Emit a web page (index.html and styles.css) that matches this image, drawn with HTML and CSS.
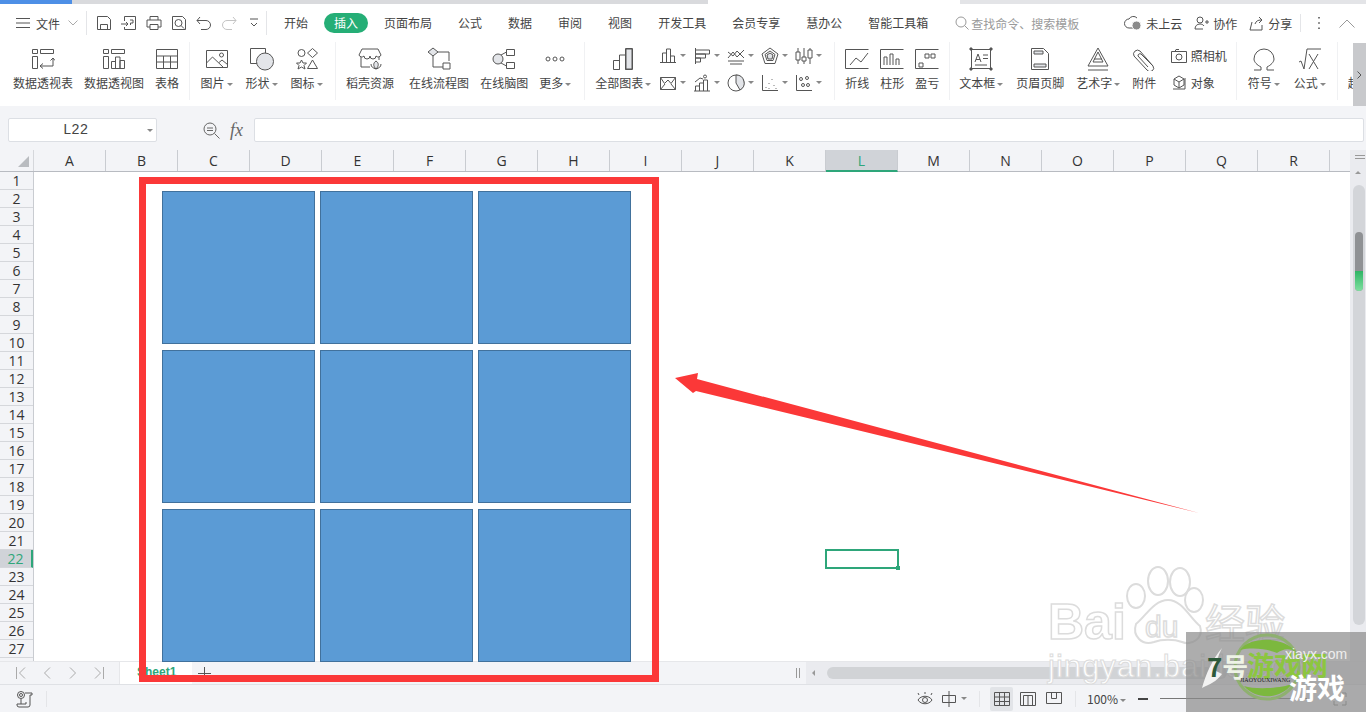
FILE: index.html
```html
<!DOCTYPE html>
<html lang="zh">
<head>
<meta charset="utf-8">
<title>WPS 表格</title>
<link rel="stylesheet" href="styles.css">
</head>
<body>
<div class="app">

  <div class="title-strip">
    <div class="strip-blue"></div><div class="strip-grey"></div><div class="strip-white"></div><div class="strip-rest"></div>
  </div>

  <div class="topbar">
    <svg class="menu-ic" viewBox="0 0 14 12"><path d="M0 1.5h14M0 6h14M0 10.5h14"/></svg>
    <span class="file-label">文件</span>
    <svg class="chev-ic" viewBox="0 0 10 6"><path d="M.5.5 5 5 9.5.5"/></svg>
    <i class="vsep first"></i>
    <div class="quick">
      <svg viewBox="0 0 16 16"><path d="M1.5 1.5h10l3 3v10h-13zM4.5 14.5v-5h7v5"/></svg>
      <svg viewBox="0 0 16 16"><path d="M3.5 6V1.5h11v13h-11V12M0 9h7M5 7l2 2-2 2M9 5h3v3H9.500v2"/></svg>
      <svg viewBox="0 0 16 16"><path d="M4 5V1.500h8V5M1 12V5h14v7h-3M4 9.500h8v5H4zM4 12H1"/></svg>
      <svg viewBox="0 0 16 16"><path d="M1.500 1.500h10l3 3v10h-13z"/><circle cx="7.500" cy="8" r="3.500"/><path d="m10 10.500 3 3"/></svg>
      <svg viewBox="0 0 16 16"><path d="M1 5.500h9a4.500 4.500 0 0 1 0 9H5M4 2 1 5.500 4 9"/></svg>
      <svg class="faded" viewBox="0 0 16 16"><path d="M15 5.500H6a4.500 4.500 0 0 0 0 9h5M12 2l3 3.500L12 9"/></svg>
      <svg viewBox="0 0 16 16"><path d="M4 4h8M5 8l3 3 3-3"/></svg>
    </div>
    <i class="vsep second"></i>
    <nav class="tabs">
      <span class="tab">开始</span>
      <span class="tab active">插入</span>
      <span class="tab">页面布局</span>
      <span class="tab">公式</span>
      <span class="tab">数据</span>
      <span class="tab">审阅</span>
      <span class="tab">视图</span>
      <span class="tab">开发工具</span>
      <span class="tab">会员专享</span>
      <span class="tab">慧办公</span>
      <span class="tab">智能工具箱</span>
    </nav>
    <div class="search">
      <svg viewBox="0 0 14 14"><circle cx="6" cy="6" r="5"/><path d="m9.500 9.500 4 4"/></svg>
      <span>查找命令、搜索模板</span>
    </div>
    <div class="top-actions">
      <span class="action"><svg class="cloud" viewBox="0 0 18 16"><path d="M9 13H5A4.500 4.500 0 0 1 5 4a5 5 0 0 1 8-1"/><circle class="solid" cx="12.500" cy="10.500" r="4.500"/></svg>未上云</span>
      <span class="action"><svg viewBox="0 0 15 15"><circle cx="6" cy="4" r="3"/><path d="M1 13c0-3 2-5 5-5 1.500 0 3 .5 4 2M1 13h8M11 6h4M13 4v4"/></svg>协作</span>
      <span class="action"><svg viewBox="0 0 15 15"><path d="M3 6 1 14h12V9M6 8c1-3 3-4 6-4M10 1l3 3-3 3"/></svg>分享</span>
      <i class="vsep third"></i>
      <svg class="dots" viewBox="0 0 4 14"><path d="M2 1v1.500M2 6.200v1.500M2 11.500V13"/></svg>
      <svg class="up-ic" viewBox="0 0 16 9"><path d="M.5 8.500 8 1l7.500 7.500"/></svg>
    </div>
  </div>

  <div class="ribbon">
    <div class="group g1">
      <div class="tool"><svg viewBox="0 0 24 24"><path d="M1.500 2.500h5v4h-5zM9.500 2.500h13v4h-13zM1.500 9.500h5v12h-5zM9 19h13v-8M9 19l3-2.500M9 19l3 2.500M22 11l-2.500 2.500M22 11l2 2.500"/></svg><span>数据透视表</span></div>
      <div class="tool"><svg viewBox="0 0 24 24"><path d="M1.500 2.500h5v4h-5zM9.500 2.500h13v4h-13zM1.500 9.500h5v12h-5zM9.500 21.500v-7h4v7M13.500 21.500V10h4.500v11.500M18 21.500v-8h4.500v8zM9.500 21.500h9"/></svg><span>数据透视图</span></div>
      <div class="tool"><svg viewBox="0 0 24 24"><path d="M1.500 2.500h21v19h-21zM1.500 9h21M1.500 15h21M8.500 9v12.500M15.500 9v12.500"/></svg><span>表格</span></div>
    </div>
    <i class="rsep"></i>
    <div class="group g2">
      <div class="tool"><svg viewBox="0 0 24 24"><path d="M1.500 3.500h21v17h-21zM1.500 16l6-6 11 10.500M14 15.500l3-2.500 5.500 4.500"/><circle cx="16.500" cy="8" r="2"/></svg><span class="caret">图片</span></div>
      <div class="tool"><svg class="wide" viewBox="0 0 26 24"><path d="M1.500 1.500h15v15h-15z"/><circle class="gray" cx="16" cy="14.500" r="8.500"/></svg><span class="caret">形状</span></div>
      <div class="tool"><svg viewBox="0 0 24 24"><circle cx="6.500" cy="6" r="3.500"/><path d="m17.500 1.500 5 4.500-5 4.500-5-4.500zM6.500 13l1.500 3h3.500l-2.500 2.500 1 3.500-3.500-2-3.500 2 1-3.500L1.500 16H5zM17.500 13l5 8.500h-10z"/></svg><span class="caret">图标</span></div>
    </div>
    <i class="rsep"></i>
    <div class="group g3">
      <div class="tool"><svg viewBox="0 0 24 24"><path d="M4 2h16l3 6a3 3 0 0 1-5 1 3 3 0 0 1-6 0 3 3 0 0 1-6 0 3 3 0 0 1-5-1zM3 10v10h9M21 10v3"/><path class="gray" d="M18 14c3 2 3 5 0 8-3-3-3-6 0-8z"/><path d="M13 17c0 3 2 4 5 5M23 17c0 3-2 4-5 5"/></svg><span>稻壳资源</span></div>
      <div class="tool"><svg viewBox="0 0 24 24"><path class="gray" d="M6 1l5 4-5 4-5-4z"/><path d="M11 5h11v9M6 9v11h10M16 16h7v6h-7z" /></svg><span>在线流程图</span></div>
      <div class="tool"><svg viewBox="0 0 24 24"><circle class="gray" cx="6" cy="12" r="5"/><path d="M14.500 2.500h8v6h-8zM14.500 15.500h8v6h-8zM9 8l5.500-3M9 16l5.500 3"/></svg><span>在线脑图</span></div>
      <div class="tool"><svg viewBox="0 0 24 24"><circle cx="5" cy="12" r="2"/><circle cx="12" cy="12" r="2"/><circle cx="19" cy="12" r="2"/></svg><span class="caret">更多</span></div>
    </div>
    <i class="rsep"></i>
    <div class="group g4">
      <div class="tool"><svg viewBox="0 0 24 24"><path d="M2.500 22.500v-9h6v9zM8.500 22.500V8h6v14.500M14.500 22.500V1.500h7v21z"/><path class="gray" d="M15 2h6v20h-6z"/></svg><span class="caret">全部图表</span></div>
      <div class="chart-grid">
        <span class="mini caret"><svg viewBox="0 0 18 18"><path d="M3.500 15V6h4v9M7.500 15V2h4v13M11.500 15V9h4v6M1 15.500h16"/></svg></span>
        <span class="mini caret"><svg viewBox="0 0 18 18"><path d="M2.500 1v16M2.500 3h14v4h-14M2.500 7h10v4h-10M2.500 11h5v4h-5"/></svg></span>
        <span class="mini caret"><svg viewBox="0 0 18 18"><path d="M1 11l5-6 4 5 7-7M1 5l5 4 4-5 7 7M1 14h16M3 17h12"/></svg></span>
        <span class="mini caret"><svg viewBox="0 0 18 18"><path d="m9 1 8 6-3 9.500H4L1 7zM9 4l5 3.500-2 6H6l-2-6z"/><path class="gray" d="m9 6 3 2-1 4H7L6 8z"/></svg></span>
        <span class="mini caret"><svg viewBox="0 0 18 18"><path d="M3 1v4M3 13v4M1 5h4v8H1zM9 1v9M9 14v3M7 10h4v4H7zM15 1v2M15 11v6M13 3h4v8h-4z"/></svg></span>
        <span class="mini caret"><svg viewBox="0 0 18 18"><path d="M1.500 3.500h15v12h-15zM1.500 3.500l4 6 3.500-3.500 3 3.500 4.500-6M1.500 15.500 6 10M16.500 15.500 12 10"/></svg></span>
        <span class="mini caret"><svg viewBox="0 0 18 18"><path d="M1 17h16M2.500 17v-5h4v5M6.500 17V9h4v8M10.500 17V6h4v11M2 8l5-4 3 1"/><circle cx="12" cy="2.500" r="1.500"/></svg></span>
        <span class="mini caret"><svg viewBox="0 0 18 18"><circle cx="9" cy="9" r="8"/><path class="gray" d="M9 1a8 8 0 0 1 4 15L9 9z"/></svg></span>
        <span class="mini caret"><svg viewBox="0 0 18 18"><path d="M1.500 1v15.500H17"/><path class="dotted" d="M5 13v.5M8 9v.500M11 5v.500M8 14v.500M13 11v.500M15 14v.500"/></svg></span>
        <span class="mini caret"><svg viewBox="0 0 18 18"><path d="M1.500 1v15.500H17"/><circle cx="6" cy="5" r="1.500"/><circle cx="12" cy="4" r="1.500"/><circle cx="8" cy="11" r="1.500"/><circle cx="13" cy="11" r="1.500"/></svg></span>
      </div>
    </div>
    <i class="rsep"></i>
    <div class="group g5">
      <div class="tool spark"><svg viewBox="0 0 24 24"><path d="M.5 2.500h23M.5 21.500h23M.5 2.500v19M5 18l6-7 5 4 7-9"/></svg><span>折线</span></div>
      <div class="tool spark"><svg viewBox="0 0 24 24"><path d="M.5 2.500h23M.5 21.500h23M.5 2.500v19M4 18v-8h3v8M10 18V7h3v11M16 18v-6h3v6"/></svg><span>柱形</span></div>
      <div class="tool spark"><svg viewBox="0 0 24 24"><path d="M.5 2.500h23M.5 21.500h23M.5 2.500v19M4 16h4v4H4zM10 7h4v4h-4zM16 7h4v4h-4z"/></svg><span>盈亏</span></div>
    </div>
    <i class="rsep"></i>
    <div class="group g6">
      <div class="tool"><svg viewBox="0 0 24 24"><path d="M2.500 2.500h19v19h-19z"/><path d="M6 15l3-8 3 8M7 12.500h4M14 8h5M14 11.500h5M6 18h12"/><path class="solid-sq" d="M1 1h2v2H1zM21 1h2v2h-2zM1 21h2v2H1zM21 21h2v2h-2z"/></svg><span class="caret">文本框</span></div>
      <div class="tool"><svg viewBox="0 0 24 24"><path d="M3.500 1.500h12l5 5v16h-17z"/><path class="gray" d="M6 4h9v3H6zM6 17h12v3H6z"/></svg><span>页眉页脚</span></div>
      <div class="tool"><svg viewBox="0 0 24 24"><path d="M12 1 2 19h20zM7 15 12 5l5 10zM8 12h8M2 23h20"/></svg><span class="caret">艺术字</span></div>
      <div class="tool"><svg viewBox="0 0 24 24"><path d="M21 19 8 4a4 4 0 0 0-6 5l13 14a3.500 3.500 0 0 0 6-4L9 7a2 2 0 0 0-3 2l10 11"/></svg><span>附件</span></div>
      <div class="stack">
        <span class="stack-row"><svg viewBox="0 0 18 16"><path d="M1.500 3.500h15v11h-15zM5 3.500l1-2h3"/><circle cx="9" cy="9" r="3"/></svg>照相机</span>
        <span class="stack-row"><svg viewBox="0 0 18 16"><path d="M9 1l5 3v6l-5 3-5-3V4zM4 4l5 3 5-3M9 7v6M3 14h12V3"/></svg>对象</span>
      </div>
    </div>
    <i class="rsep"></i>
    <div class="group g7">
      <div class="tool"><svg viewBox="0 0 24 24"><path d="M2 23h7v-3C5 18 2 15 2 12a10 10 0 0 1 20 0c0 3-3 6-7 8v3h7"/></svg><span class="caret">符号</span></div>
      <div class="tool"><svg viewBox="0 0 24 24"><path d="M1 15l2-1 3 8 3-20h14M11 7l9 15M20 7l-9 15"/></svg><span class="caret">公式</span></div>
    </div>
    <i class="rsep"></i>
    <div class="clip-tool">超</div>
    <div class="ribbon-next"><svg viewBox="0 0 5 8"><path d="m.5.5 3.500 3.500L.5 7.500"/></svg></div>
  </div>

  <div class="formula">
    <div class="namebox"><span>L22</span><i class="name-caret"></i></div>
    <svg class="zoom-ic" viewBox="0 0 17 17"><circle cx="7" cy="7" r="6"/><path d="M4 6h6M4 8.500h6M11.500 11.500l5 5"/></svg>
    <span class="fx">fx</span>
    <div class="formula-input"></div>
  </div>

  <div class="sheet">
    <div class="sheet-main">
      <div class="col-head">
        <div class="corner"><i></i></div>
        <div class="col">A</div><div class="col">B</div><div class="col">C</div><div class="col">D</div><div class="col">E</div><div class="col">F</div><div class="col">G</div><div class="col">H</div><div class="col">I</div><div class="col">J</div><div class="col">K</div><div class="col sel">L</div><div class="col">M</div><div class="col">N</div><div class="col">O</div><div class="col">P</div><div class="col">Q</div><div class="col">R</div>
      </div>
      <div class="sheet-body">
        <div class="row-head">
          <div class="row">1</div><div class="row">2</div><div class="row">3</div><div class="row">4</div><div class="row">5</div><div class="row">6</div><div class="row">7</div><div class="row">8</div><div class="row">9</div><div class="row">10</div><div class="row">11</div><div class="row">12</div><div class="row">13</div><div class="row">14</div><div class="row">15</div><div class="row">16</div><div class="row">17</div><div class="row">18</div><div class="row">19</div><div class="row">20</div><div class="row">21</div><div class="row sel">22</div><div class="row">23</div><div class="row">24</div><div class="row">25</div><div class="row">26</div><div class="row">27</div><div class="row">28</div>
        </div>
        <div class="cells">
          <div class="shapes">
            <div class="shape"></div><div class="shape"></div><div class="shape"></div>
            <div class="shape"></div><div class="shape"></div><div class="shape"></div>
            <div class="shape"></div><div class="shape"></div><div class="shape"></div>
          </div>
          <div class="cell-cursor"></div>
        </div>
      </div>
    </div>
    <div class="vscroll">
      <svg class="grip" viewBox="0 0 10 4"><path d="M0 .5h10M0 3.500h10"/></svg>
      <i class="arrow-up"></i>
      <div class="vtrack">
        <div class="vthumb"><div class="vthumb-green"></div></div>
      </div>
    </div>
  </div>

  <div class="sheetbar">
    <div class="sheet-nav">
      <svg viewBox="0 0 10 12"><path d="M.5 0v12M9 .5 3.500 6 9 11.500"/></svg>
      <svg viewBox="0 0 10 12"><path d="M8 .5 2.500 6 8 11.500"/></svg>
      <svg viewBox="0 0 10 12"><path d="M2 .5 7.500 6 2 11.500"/></svg>
      <svg viewBox="0 0 10 12"><path d="M9.500 0v12M1 .5 6.500 6 1 11.500"/></svg>
    </div>
    <div class="sheet-tab">Sheet1</div>
    <svg class="add-sheet" viewBox="0 0 13 13"><path d="M6.500 0v13M0 6.500h13"/></svg>
    <div class="hscroll">
      <svg class="hgrip" viewBox="0 0 4 10"><path d="M.5 0v10M3.500 0v10"/></svg>
      <div class="htrack"><i class="arrow-left"></i><div class="hthumb"></div></div>
    </div>
  </div>

  <div class="statusbar">
    <svg class="macro" viewBox="0 0 18 18"><circle cx="5" cy="5" r="3.500"/><circle cx="5" cy="5" r="1.500"/><path d="M9 3h7v2h-2v10a2 2 0 0 1-2 2H3a2 2 0 0 1-2-2v-1h9v-2M5 9v5"/></svg>
    <i class="status-sep"></i>
    <div class="status-right">
      <svg class="st-ic" viewBox="0 0 16 14"><path d="M1 8c3-5 11-5 14 0-3 5-11 5-14 0zM2 3 1 1M8 2V0M14 3l1-2"/><circle cx="8" cy="8" r="2.500"/></svg>
      <span class="mini caret st-mid"><svg class="st-ic" viewBox="0 0 16 16"><path d="M1.500 4.500h13v7h-13zM8 0v16"/></svg></span>
      <i class="vsep fourth"></i>
      <span class="view on"><svg class="st-ic" viewBox="0 0 16 14"><path d="M.5.500h15v13H.500zM.5 5h15M.5 9.500h15M5.500.500v13M10.500.500v13"/></svg></span>
      <span class="view"><svg class="st-ic" viewBox="0 0 16 14"><path d="M.5.500h15v13H.500zM3.500 3.500h9v10h-9zM8 3.500v10"/></svg></span>
      <span class="view"><svg class="st-ic" viewBox="0 0 16 14"><path d="M.5.500h15v11H.500zM5.500.500v6h5v-6"/></svg></span>
      <i class="vsep fifth"></i>
      <span class="zoom-val caret">100%</span>
      <i class="zoom-minus"></i>
      <i class="zoom-line"></i>
      <svg class="st-ic full" viewBox="0 0 14 14"><path d="M1 5V1h4M9 1h4v4M13 9v4H9M5 13H1V9"/></svg>
    </div>
  </div>

  <svg class="marks" viewBox="0 0 1366 712">
    <rect class="red-box" x="142.500" y="180.500" width="513" height="498"/>
    <polygon class="red-arrow" points="675,378 698,373 697,379 1199,513 696,391 693,393"/>
    <g class="paw">
      <ellipse cx="1158" cy="581" rx="10" ry="14"/>
      <ellipse cx="1180" cy="582" rx="10" ry="14"/>
      <ellipse cx="1136" cy="596" rx="9" ry="12"/>
      <ellipse cx="1194" cy="600" rx="9" ry="12"/>
      <path d="M1168 600c14 0 22 18 32 26 4 12-8 20-18 16-8-3-20-3-28 0-12 4-22-6-18-18 10-8 18-24 32-24z"/>
    </g>
    <text class="wm wm-bai" x="1048" y="639">Bai</text>
    <text class="wm wm-du" x="1145" y="637">du</text>
    <text class="wm wm-jy" x="1205" y="638">经验</text>
    <text class="wm wm-url" x="1048" y="677">jingyan.baidu.com</text>
    <rect class="corner-mask" x="1186" y="632" width="180" height="80"/>
    <path class="logo-swoosh" d="M1222 648c-10 12-16 26-20 40 8-4 14-6 20-14l-8-4c2-8 4-14 8-22z"/>
    <circle class="logo-ring" cx="1267" cy="667" r="32"/>
    <path class="logo-leaf" d="M1240 650c10-14 44-14 56 2-8-5-14-2-19 1-10-4-24-6-37-3zM1244 686c12 14 36 14 48-2-10 4-36 6-48 2z"/>
    <text class="logo-7" x="1207" y="677">7<tspan class="logo-hao">号</tspan></text>
    <text class="logo-game" x="1247" y="676">游戏网</text>
    <text class="logo-site" x="1285" y="659">xiayx.com</text>
    <text class="logo-pin" x="1240" y="682">JIAOYOUXIWANG</text>
    <text class="logo-white" x="1289" y="699">游戏</text>
  </svg>
</div>
</body>
</html>
```
FILE: styles.css
```css
* {
    box-sizing: border-box;
}

html, body {
    margin: 0;
    height: 100%;
    overflow: hidden;
}

body {
    font-family: "Noto Sans CJK SC", "Liberation Sans", sans-serif;
    font-size: 12px;
    color: #444;
    background-color: #f3f4f7;
}

i {
    display: block;
}

svg {
    display: block;
    fill: none;
    stroke: #555;
    stroke-width: 1;
    flex: none;
}

.app {
    position: relative;
    width: 1366px;
    height: 712px;
    display: flex;
    flex-direction: column;
    overflow: hidden;
}

/* window strip */
.title-strip {
    display: flex;
    height: 4px;
}

.strip-blue {
    width: 72px;
    background-color: #4d8fe6;
}

.strip-grey {
    width: 636px;
    background-color: #d9dadd;
}

.strip-white {
    width: 252px;
    background-color: #fff;
}

.strip-rest {
    flex: 1;
    background-color: #e3e4e7;
}

/* top row */
.topbar {
    display: flex;
    align-items: center;
    height: 38px;
    padding-left: 16px;
    background-color: #fff;
}

.menu-ic {
    width: 14px;
    height: 12px;
}

.file-label {
    margin-left: 6px;
}

.chev-ic {
    width: 10px;
    height: 6px;
    margin-left: 8px;
    stroke: #aaa;
}

.vsep {
    width: 1px;
    height: 24px;
    background-color: #e4e5e8;
}

.vsep.first {
    margin-left: 8px;
}

.quick {
    display: flex;
    gap: 9px;
    margin-left: 9px;
}

.quick svg {
    width: 16px;
    height: 16px;
}

.quick .faded {
    stroke: #c4c4c4;
}

.vsep.second {
    margin-left: 4px;
}

.tabs {
    display: flex;
    align-items: center;
    margin-left: 4px;
}

.tab {
    padding: 0 13px;
    line-height: 20px;
}

.tab.active {
    padding: 0 10px;
    margin: 0 3px;
    border-radius: 10px;
    color: #fff;
    background-color: #25ae76;
}

.search {
    display: flex;
    align-items: center;
    gap: 2px;
    margin-left: 14px;
    color: #9a9a9a;
}

.search svg {
    width: 14px;
    height: 14px;
    stroke: #9a9a9a;
}

.top-actions {
    display: flex;
    align-items: center;
    margin-left: 45px;
}

.action {
    display: flex;
    align-items: center;
    gap: 4px;
    margin-right: 12px;
}

.action svg {
    width: 15px;
    height: 15px;
}

.action .cloud {
    width: 18px;
    height: 16px;
}

.solid {
    fill: #8b8b8b;
    stroke: #fff;
}

.vsep.third {
    margin-left: -4px;
    height: 18px;
}

.dots {
    width: 4px;
    height: 14px;
    margin-left: 16px;
    stroke-width: 2;
    stroke: #777;
}

.up-ic {
    width: 16px;
    height: 9px;
    margin-left: 18px;
    stroke: #999;
}

/* ribbon */
.ribbon {
    display: flex;
    height: 64px;
    padding-left: 7.5px;
    background-color: #fff;
    position: relative;
}

.group {
    display: flex;
}

.rsep {
    width: 1px;
    height: 58px;
    background-color: #f0f1f3;
}

.g1 {
    margin-right: 4.5px;
}

.g1 .tool {
    padding: 5px 5.5px 0;
}

.g2 {
    margin: 0 6px 0 4px;
}

.g2 .tool {
    padding: 5px 6.5px 0;
}

.g3 {
    margin: 0 7px 0 4px;
}

.g3 .tool:first-child {
    margin-right: 3px;
}

.g3 .tool:nth-child(n+3) {
    margin-left: -1px;
}

.g4 {
    margin: 0 5px 0 4px;
}

.g5 {
    margin: 0 4.5px 0 4.5px;
}

.g6 {
    margin: 0 9px 0 3px;
}

.g6 .tool:first-child {
    margin-right: 1px;
}

.g7 {
    margin: 0 5px 0 5px;
}

.g7 .tool:first-child {
    margin-right: 2px;
}

.tool {
    display: flex;
    flex-direction: column;
    align-items: center;
    padding: 5px 6px 0;
}

.tool svg {
    width: 24px;
    height: 24px;
}

.tool svg.wide {
    width: 26px;
}

.tool span {
    margin-top: 3px;
    line-height: 18px;
    white-space: nowrap;
}

.g5 .tool.spark {
    padding: 5px 5.5px 0;
}

.gray {
    fill: #e3e5e9;
}

.solid-sq {
    fill: #555;
}

.caret::after {
    content: "";
    display: inline-block;
    margin-left: 2px;
    vertical-align: 2px;
    border: 3px solid transparent;
    border-top-color: #888;
    border-bottom: 0;
}

.chart-grid {
    display: grid;
    grid-template-columns: repeat(5, 34px);
    grid-template-rows: 27px 27px;
    margin-left: 2px;
}

.mini {
    display: flex;
    align-items: center;
    gap: 1px;
}

.mini svg {
    width: 18px;
    height: 18px;
}

.dotted {
    stroke-width: 2;
    stroke: #777;
}

.stack {
    display: flex;
    flex-direction: column;
    gap: 9px;
    padding-top: 5px;
    margin-left: 7.5px;
}

.stack-row {
    display: flex;
    align-items: center;
    gap: 3px;
    line-height: 18px;
}

.stack-row svg {
    width: 18px;
    height: 16px;
}

.clip-tool {
    margin: 32px 0 0 10px;
    width: 8px;
    overflow: hidden;
    line-height: 18px;
}

.ribbon-next {
    position: absolute;
    right: 0;
    top: 1px;
    width: 13px;
    height: 63px;
    padding-left: 4px;
    display: flex;
    align-items: center;
    background-color: #c8c9cc;
}

.ribbon-next svg {
    width: 5px;
    height: 8px;
}

/* formula row */
.formula {
    display: flex;
    align-items: center;
    height: 44px;
    padding: 4px 2px 0 8px;
}

.namebox {
    position: relative;
    width: 149px;
    height: 24px;
    border: 1px solid #dcdfe4;
    border-radius: 2px;
    background-color: #fff;
    text-align: center;
    font-family: "Liberation Mono", monospace;
    font-size: 14px;
    line-height: 22px;
    padding-right: 14px;
}

.name-caret {
    position: absolute;
    right: 3px;
    top: 10px;
    border: 3px solid transparent;
    border-top-color: #888;
    border-bottom: 0;
}

.zoom-ic {
    width: 17px;
    height: 17px;
    margin-left: 46px;
    stroke: #666;
}

.fx {
    margin-left: 10px;
    width: 24px;
    font-family: "Liberation Serif", serif;
    font-style: italic;
    font-size: 18px;
    color: #666;
    line-height: 22px;
}

.formula-input {
    flex: 1;
    height: 24px;
    border: 1px solid #dcdfe4;
    border-radius: 2px;
    background-color: #fff;
}

/* grid */
.sheet {
    display: flex;
    height: 511px;
}

.sheet-main {
    flex: 1;
    display: flex;
    flex-direction: column;
    min-width: 0;
}

.col-head {
    display: flex;
    height: 22px;
    border-bottom: 1px solid #b8bbc1;
}

.corner {
    position: relative;
    width: 34px;
    border-right: 1px solid #d5d7db;
}

.corner i {
    position: absolute;
    left: 18px;
    top: 6px;
    width: 11px;
    height: 11px;
    background-color: #b9bcc0;
    clip-path: polygon(100% 0, 100% 100%, 0 100%);
}

.col {
    width: 72px;
    border-right: 1px solid #c9ccd1;
    text-align: center;
    font-family: "Open Sans", sans-serif;
    font-size: 14px;
    line-height: 21px;
    color: #333;
}

.col.sel {
    color: #2ea67a;
    background-color: #d0d3d8;
    border-bottom: 2px solid #2ea67a;
    height: 22px;
}

.sheet-body {
    flex: 1;
    display: flex;
    min-height: 0;
}

.row-head {
    width: 34px;
    flex: none;
    border-right: 1px solid #c9ccd1;
    overflow: hidden;
}

.row {
    height: 18px;
    border-bottom: 1px solid #d5d7db;
    text-align: center;
    font-family: "Open Sans", sans-serif;
    font-size: 14px;
    line-height: 17px;
    color: #333;
}

.row.sel {
    color: #2ea67a;
    background-color: #d0d3d8;
    border-right: 2px solid #2ea67a;
}

.cells {
    position: relative;
    flex: 1;
    background-color: #fff;
}

.shapes {
    position: absolute;
    left: 128px;
    top: 19px;
    display: grid;
    grid-template-columns: 153px 153px 153px;
    grid-template-rows: 153px 153px 153px;
    column-gap: 5px;
    row-gap: 6px;
}

.shape {
    background-color: #5b9bd5;
    border: 1px solid #41719c;
}

.cell-cursor {
    position: absolute;
    left: 791px;
    top: 377px;
    width: 74px;
    height: 20px;
    border: 2px solid #2ea67a;
}

.cell-cursor::after {
    content: "";
    position: absolute;
    right: -3px;
    bottom: -3px;
    width: 4px;
    height: 4px;
    background-color: #2ea67a;
}

.vscroll {
    position: relative;
    width: 16px;
    flex: none;
    background-color: #eaebef;
}

.grip {
    position: absolute;
    left: 5px;
    top: 5px;
    width: 10px;
    height: 4px;
    stroke: #999;
}

.arrow-up {
    position: absolute;
    left: 5px;
    top: 21px;
    border: 3px solid transparent;
    border-bottom-color: #999;
    border-top: 0;
}

.vtrack {
    position: absolute;
    left: 3px;
    top: 35px;
    width: 12px;
    height: 440px;
    border-radius: 6px;
    background-color: #d3d5d9;
}

.vthumb {
    position: absolute;
    left: 2px;
    top: 47px;
    width: 8px;
    height: 59px;
    border-radius: 4px;
    background-color: #8f9194;
    overflow: hidden;
}

.vthumb-green {
    position: absolute;
    left: 0;
    bottom: 0;
    width: 100%;
    height: 20px;
    background-image: linear-gradient(#2fb565, #7fe0a0);
}

/* sheet tabs */
.sheetbar {
    display: flex;
    align-items: center;
    height: 24px;
    border-top: 1px solid #e6e7ea;
    border-bottom: 1px solid #dfe1e5;
}

.sheet-nav {
    display: flex;
    gap: 16px;
    width: 120px;
    padding-left: 16px;
    border-right: 1px solid #e6e7ea;
    height: 100%;
    align-items: center;
}

.sheet-nav svg {
    width: 10px;
    height: 12px;
    stroke: #aaa;
}

.sheet-tab {
    width: 72px;
    height: 100%;
    padding-left: 17px;
    background-color: #fff;
    color: #2ea67a;
    font-family: "Liberation Sans", sans-serif;
    font-weight: bold;
    line-height: 20px;
}

.add-sheet {
    width: 13px;
    height: 13px;
    margin-left: 6px;
}

.hscroll {
    display: flex;
    align-items: center;
    height: 100%;
    margin-left: auto;
    width: 570px;
}

.hgrip {
    width: 4px;
    height: 10px;
    stroke: #999;
    margin-right: 6px;
}

.htrack {
    position: relative;
    flex: 1;
    height: 100%;
    background-color: #eaebef;
}

.arrow-left {
    position: absolute;
    left: 6px;
    top: 8px;
    border: 3px solid transparent;
    border-right-color: #999;
    border-left: 0;
}

.hthumb {
    position: absolute;
    left: 21px;
    top: 5px;
    width: 400px;
    height: 12px;
    border-radius: 6px;
    background-color: #d1d3d6;
}

/* status row */
.statusbar {
    display: flex;
    align-items: center;
    flex: 1;
    padding-left: 16px;
}

.macro {
    width: 18px;
    height: 18px;
}

.status-sep {
    width: 1px;
    height: 16px;
    margin-left: 12px;
    background-color: #e4e5e8;
}

.status-right {
    display: flex;
    align-items: center;
    margin-left: auto;
    width: 449px;
}

.st-ic {
    width: 16px;
    height: 14px;
}

.st-mid {
    margin-left: 7px;
}

.st-mid svg {
    height: 16px;
}

.vsep.fourth {
    height: 16px;
    margin-left: 12px;
}

.view {
    display: flex;
    align-items: center;
    justify-content: center;
    width: 23px;
    height: 24px;
    margin-left: 3px;
}

.view.on {
    margin-left: 10px;
    background-color: #e2e4e8;
    border-radius: 2px;
}

.vsep.fifth {
    height: 16px;
    margin-left: 10px;
}

.zoom-val {
    margin-left: 11px;
    white-space: nowrap;
}

.zoom-minus {
    width: 10px;
    height: 2px;
    margin-left: 12px;
    background-color: #444;
}

.zoom-line {
    width: 147px;
    height: 1px;
    margin-left: 12px;
    background-color: #777;
}

.full {
    width: 14px;
    height: 14px;
    margin-left: 26px;
    stroke: #888;
}

/* annotations and watermarks on top of the page */
.marks {
    position: absolute;
    left: 0;
    top: 0;
    width: 1366px;
    height: 712px;
    stroke: none;
    pointer-events: none;
}

.red-box {
    fill: none;
    stroke: #fb3838;
    stroke-width: 7;
}

.red-arrow {
    fill: #fb3838;
}

.paw {
    fill: none;
    stroke: #dcdcdc;
    stroke-width: 2;
}

.wm {
    font-family: "Liberation Sans", sans-serif;
    fill: #fff;
    stroke: #dcdcdc;
    stroke-width: 1.500;
}

.wm-bai {
    font-size: 50px;
    font-weight: bold;
}

.wm-du {
    font-size: 30px;
}

.wm-jy {
    font-family: "Noto Sans CJK SC", sans-serif;
    font-size: 40px;
}

.wm-url {
    font-size: 31px;
    letter-spacing: 1px;
    stroke-width: 1;
}

.corner-mask {
    fill: #8a8a8a;
    fill-opacity: .7;
}

.logo-swoosh {
    fill: #f2f2f2;
}

.logo-ring {
    fill: none;
    stroke: #8fb070;
    stroke-width: 3;
}

.logo-leaf {
    fill: #7cb83e;
}

.logo-7 {
    font-family: "Noto Sans CJK SC", sans-serif;
    font-size: 26px;
    font-weight: bold;
    fill: #2d5a3a;
}

.logo-hao {
    fill: #eef3e6;
}

.logo-game {
    font-family: "Noto Sans CJK SC", sans-serif;
    font-size: 27px;
    font-weight: bold;
    fill: #8cc63f;
}

.logo-site {
    font-family: "Liberation Sans", sans-serif;
    font-size: 14px;
    fill: #eee;
}

.logo-pin {
    font-family: "Liberation Serif", serif;
    font-size: 6px;
    fill: #222;
}

.logo-white {
    font-family: "Noto Sans CJK SC", sans-serif;
    font-size: 28px;
    font-weight: bold;
    fill: #fff;
}
```
